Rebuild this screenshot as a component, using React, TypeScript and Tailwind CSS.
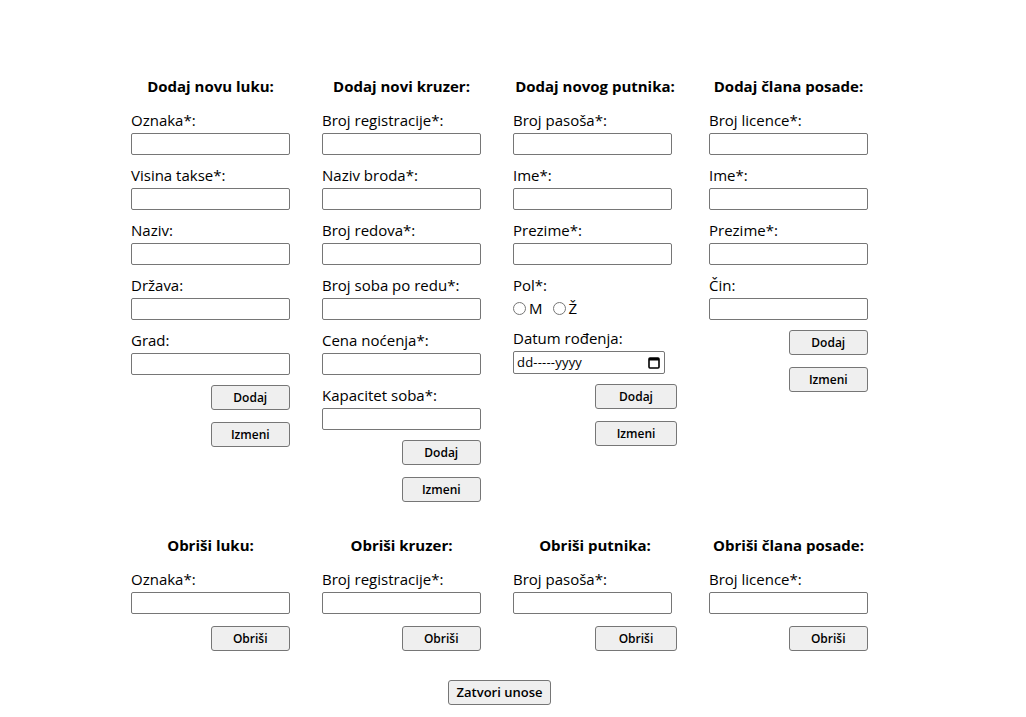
import React from 'react';

const font = { fontFamily: '"Open Sans", "Noto Sans", sans-serif' };

function Field({ label }: { label: string }) {
    return (
        <div className="flex flex-col mb-[10px]">
            <label className="text-[15px] leading-5 text-black mb-[3px] whitespace-nowrap">{label}</label>
            <input type="text" className="h-[22px] w-[159px] border border-[#767676] rounded-[2px] bg-white" />
        </div>
    );
}

function Btn({ children, className = '' }: { children: React.ReactNode; className?: string }) {
    return (
        <button
            className={
                'w-1/2 h-[25px] self-end bg-[#efefef] border border-[#767676] rounded-[3px] text-[12px] font-semibold text-black ' +
                className
            }
        >
            {children}
        </button>
    );
}

function Heading({ children }: { children: React.ReactNode }) {
    return <h4 className="text-[15px] leading-5 font-bold text-black text-center whitespace-nowrap mb-[14px]">{children}</h4>;
}

function Column({ title, fields, extra, del }: { title: string; fields: string[]; extra?: React.ReactNode; del?: boolean }) {
    return (
        <div className="flex flex-col">
            <Heading>{title}</Heading>
            {fields.map((f) => (
                <Field key={f} label={f} />
            ))}
            {extra}
            {del ? (
                <Btn className="mt-[2px]">Obriši</Btn>
            ) : (
                <>
                    <Btn>Dodaj</Btn>
                    <Btn className="mt-[12px]">Izmeni</Btn>
                </>
            )}
        </div>
    );
}

function PutnikExtra() {
    return (
        <>
            <div className="flex flex-col mb-[10px]">
                <span className="text-[15px] leading-5 mb-[3px]">Pol*:</span>
                <div className="flex items-center h-5 text-[15px]">
                    <input type="radio" name="pol" className="w-[13px] h-[13px] m-0 mr-[3px]" />
                    <span className="mr-[10px]">M</span>
                    <input type="radio" name="pol" className="w-[13px] h-[13px] m-0 mr-[3px]" />
                    <span>Ž</span>
                </div>
            </div>
            <div className="flex flex-col mb-[10px]">
                <span className="text-[15px] leading-5 mb-[3px]">Datum rođenja:</span>
                <div className="h-[23px] w-[152px] border border-[#767676] rounded-[2px] flex items-center justify-between pl-[3px] pr-[4px]">
                    <span className="text-[13px] text-black tracking-[0.2px]">dd-----yyyy</span>
                    <svg width="12" height="13" viewBox="0 0 12 13" fill="none">
                        <rect x="1" y="2" width="10" height="10" rx="1" stroke="black" strokeWidth="1.6" />
                        <rect x="1" y="2" width="10" height="2.5" fill="black" />
                    </svg>
                </div>
            </div>
        </>
    );
}

export default function App() {
    return (
        <div style={font} className="min-h-[717px] bg-white text-black flex justify-center pr-[27px] pt-[76px]">
            <div className="flex flex-col items-center">
                <div className="grid grid-cols-[159px_159px_164px_159px] gap-x-8 items-start">
                    <Column title="Dodaj novu luku:" fields={['Oznaka*:', 'Visina takse*:', 'Naziv:', 'Država:', 'Grad:']} />
                    <Column
                        title="Dodaj novi kruzer:"
                        fields={['Broj registracije*:', 'Naziv broda*:', 'Broj redova*:', 'Broj soba po redu*:', 'Cena noćenja*:', 'Kapacitet soba*:']}
                    />
                    <Column title="Dodaj novog putnika:" fields={['Broj pasoša*:', 'Ime*:', 'Prezime*:']} extra={<PutnikExtra />} />
                    <Column title="Dodaj člana posade:" fields={['Broj licence*:', 'Ime*:', 'Prezime*:', 'Čin:']} />
                </div>
                <div className="grid grid-cols-[159px_159px_164px_159px] gap-x-8 items-start mt-[33px]">
                    <Column title="Obriši luku:" fields={['Oznaka*:']} del />
                    <Column title="Obriši kruzer:" fields={['Broj registracije*:']} del />
                    <Column title="Obriši putnika:" fields={['Broj pasoša*:']} del />
                    <Column title="Obriši člana posade:" fields={['Broj licence*:']} del />
                </div>
                <button className="mt-[29px] h-[25px] px-[8px] bg-[#efefef] border border-[#767676] rounded-[3px] text-[13px] font-semibold">
                    Zatvori unose
                </button>
            </div>
        </div>
    );
}
